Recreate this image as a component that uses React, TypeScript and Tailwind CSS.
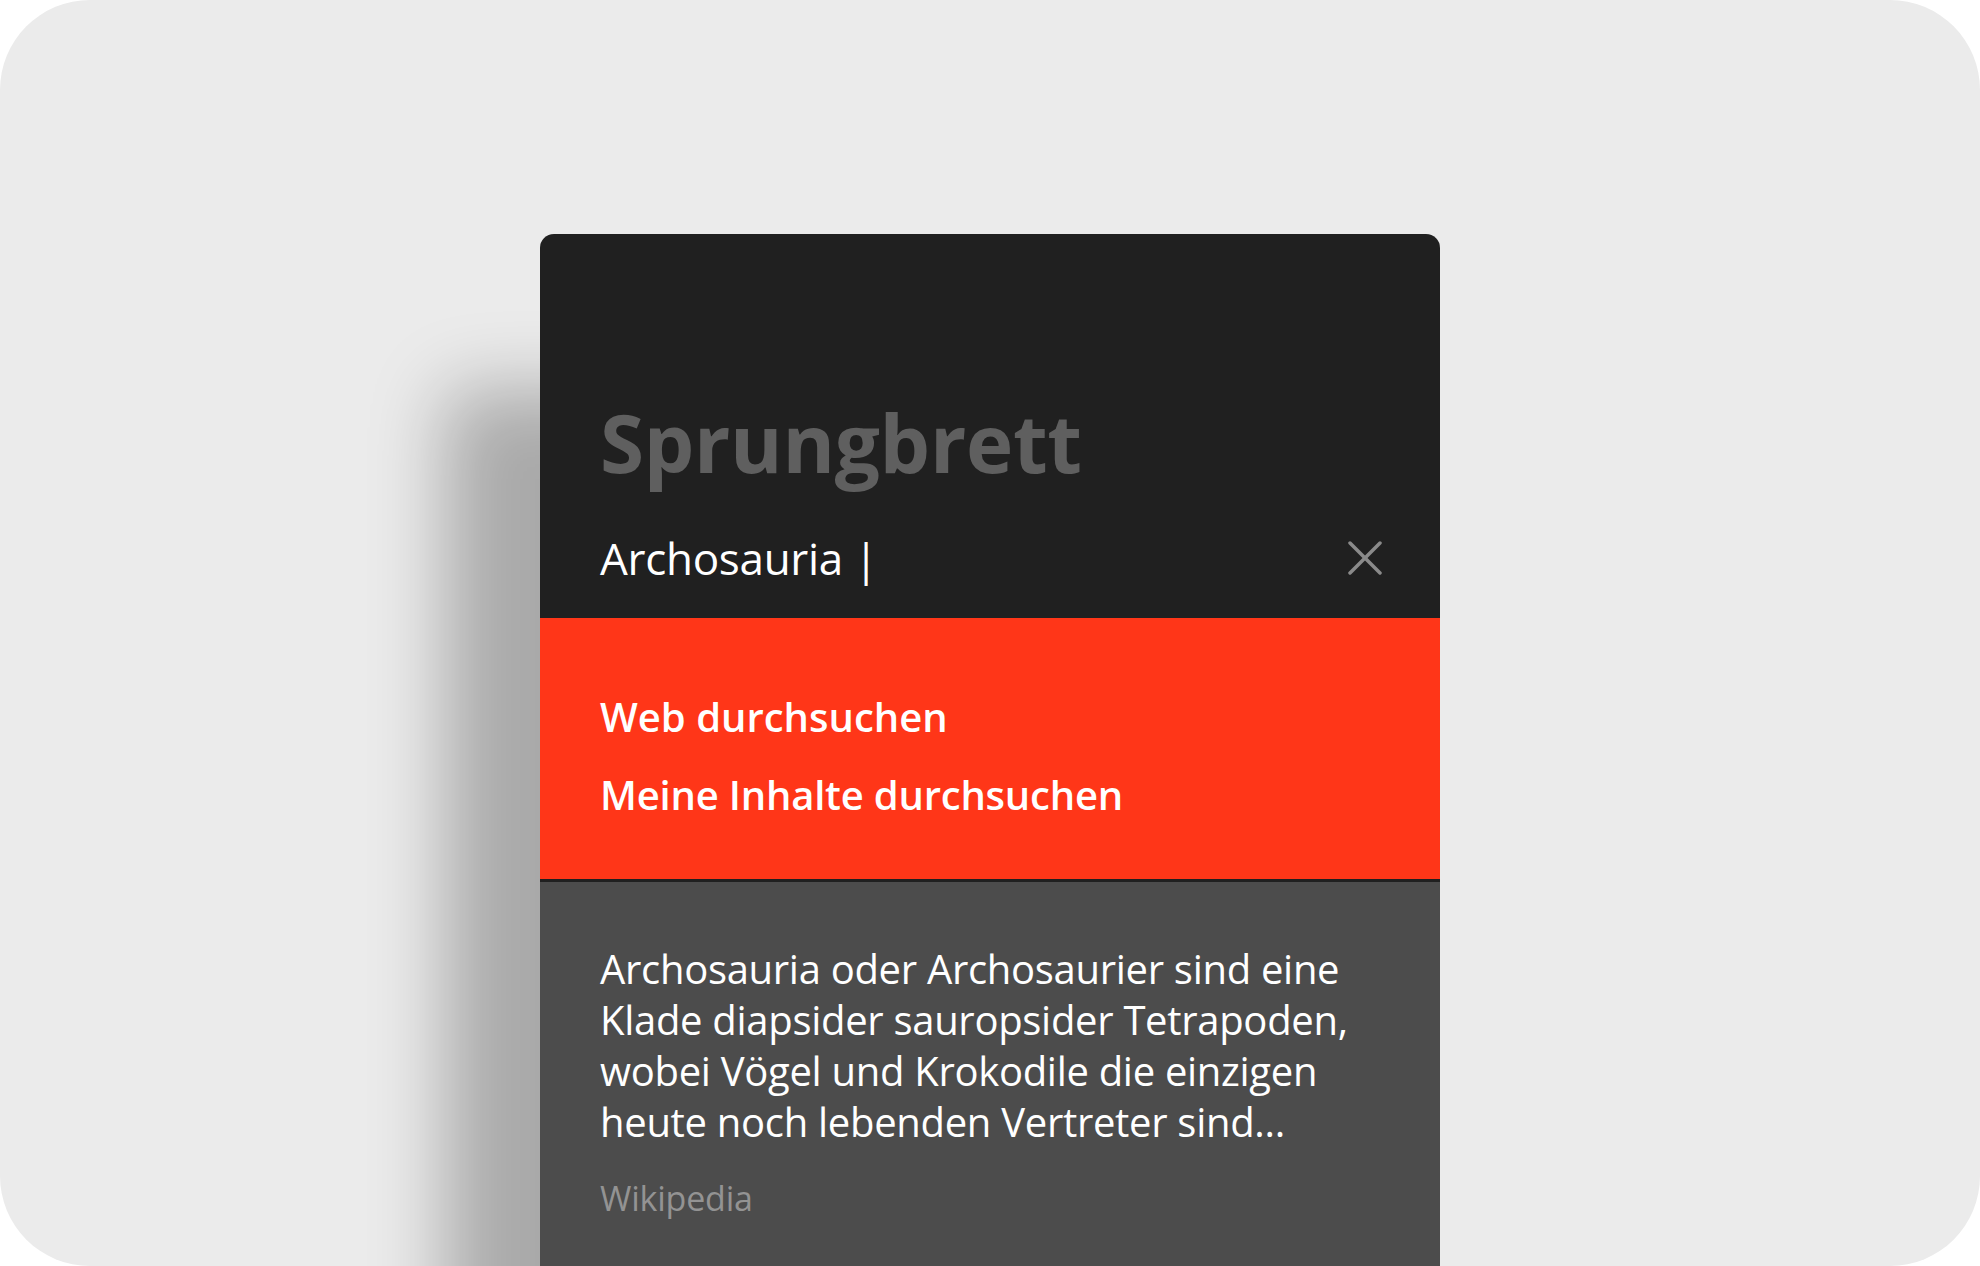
import React from "react";

export default function App() {
  return (
    <div className="w-[1980px] h-[1266px] bg-white">
      <div
        className="w-full h-full rounded-[90px] bg-[#ebebeb] overflow-hidden flex justify-center pt-[234px]"
        style={{ fontFamily: '"Open Sans", "Noto Sans", sans-serif' }}
      >
        <div className="w-[900px] h-[1032px] flex flex-col rounded-t-[14px] overflow-hidden shadow-[-95px_155px_75px_rgba(0,0,0,0.28)]">
          {/* header */}
          <div className="bg-[#202020] px-[60px] pt-[168px] pb-[32px]">
            <div className="text-[80px] leading-[80px] font-bold text-[#5f5f5f] tracking-[-0.3px]">
              Sprungbrett
            </div>
            <div className="mt-[48px] flex items-center justify-between h-[56px]">
              <div className="text-[44px] leading-[56px] font-normal text-white tracking-[-0.3px]">
                Archosauria |
              </div>
              <svg
                width="34"
                height="34"
                viewBox="0 0 34 34"
                className="mr-[-2px]"
                fill="none"
                stroke="#8a8a8a"
                strokeWidth="3.5"
                strokeLinecap="round"
              >
                <line x1="2" y1="2" x2="32" y2="32" />
                <line x1="32" y1="2" x2="2" y2="32" />
              </svg>
            </div>
          </div>
          {/* red */}
          <div className="bg-[#ff3618] px-[60px] pt-[75px] pb-[60px] flex flex-col gap-[30px] border-b-[3px] border-[#202020]">
            <div className="text-[40px] leading-[48px] font-semibold text-white">
              Web durchsuchen
            </div>
            <div className="text-[40px] leading-[48px] font-semibold text-white tracking-[-0.2px]">
              Meine Inhalte durchsuchen
            </div>
          </div>
          {/* gray */}
          <div className="flex-1 bg-[#4c4c4c] px-[60px] pt-[61px]">
            <div className="text-[40px] leading-[51px] font-normal text-white whitespace-nowrap tracking-[-0.3px]">
              Archosauria oder Archosaurier sind eine
              <br />
              Klade diapsider sauropsider Tetrapoden,
              <br />
              wobei Vögel und Krokodile die einzigen
              <br />
              heute noch lebenden Vertreter sind...
            </div>
            <div className="mt-[29px] text-[34px] leading-[44px] font-normal text-[#939393] tracking-[-0.2px]">
              Wikipedia
            </div>
          </div>
        </div>
      </div>
    </div>
  );
}
